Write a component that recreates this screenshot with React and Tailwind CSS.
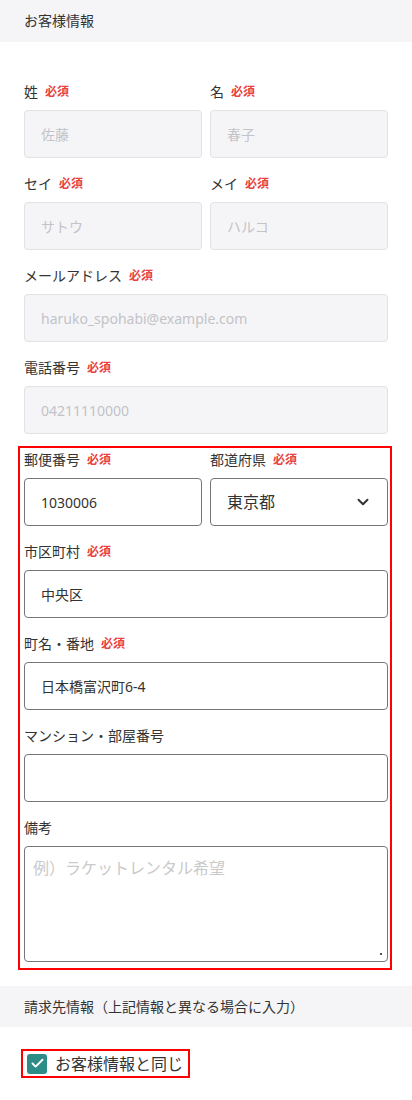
import { ChevronDown, Check } from "lucide-react";

function Label({ text, required }) {
  return (
    <div className="h-5 mb-2 flex items-center gap-[7px] text-sm text-[#333]">
      <span>{text}</span>
      {required && <span className="text-xs font-bold text-[#e8413e]">必須</span>}
    </div>
  );
}

function DisabledField({ label, placeholder }) {
  return (
    <div className="flex-1 min-w-0">
      <Label text={label} required />
      <input
        readOnly
        placeholder={placeholder}
        className="w-full h-12 rounded border border-[#e1e1e6] bg-[#f5f5f7] px-4 text-sm placeholder:text-[#c3c3c8] outline-none"
      />
    </div>
  );
}

function Field({ label, required, value }) {
  return (
    <div className="flex-1 min-w-0">
      <Label text={label} required={required} />
      <input
        readOnly
        defaultValue={value}
        className="w-full h-12 rounded border border-[#767676] bg-white px-4 text-sm text-[#333] outline-none"
      />
    </div>
  );
}

export default function App() {
  return (
    <div className="w-[412px] min-h-[1100px] bg-white font-['Noto_Sans','Noto_Sans_CJK_JP',sans-serif] text-[#333]">
      <div className="h-[42px] bg-[#f5f5f7] flex items-center px-6 text-sm">お客様情報</div>

      <div className="px-6 pt-[40px] flex flex-col gap-4">
        <div className="flex gap-2">
          <DisabledField label="姓" placeholder="佐藤" />
          <DisabledField label="名" placeholder="春子" />
        </div>
        <div className="flex gap-2">
          <DisabledField label="セイ" placeholder="サトウ" />
          <DisabledField label="メイ" placeholder="ハルコ" />
        </div>
        <DisabledField label="メールアドレス" placeholder="haruko_spohabi@example.com" />
        <DisabledField label="電話番号" placeholder="04211110000" />
      </div>

      <div className="mt-3 ml-[18px] mr-[20px] border-2 border-[#f00] pl-1 pr-[2px] pt-[2px] pb-[6px] flex flex-col gap-4">
        <div className="flex gap-2">
          <Field label="郵便番号" required value="1030006" />
          <div className="flex-1 min-w-0">
            <Label text="都道府県" required />
            <div className="h-12 rounded border border-[#767676] bg-white pl-4 pr-[15px] flex items-center justify-between">
              <span className="text-base text-[#333]">東京都</span>
              <ChevronDown size={18} strokeWidth={2.6} className="text-[#333]" />
            </div>
          </div>
        </div>
        <Field label="市区町村" required value="中央区" />
        <Field label="町名・番地" required value="日本橋富沢町6-4" />
        <Field label="マンション・部屋番号" value="" />
        <div>
          <Label text="備考" />
          <div className="relative">
            <textarea
              readOnly
              placeholder="例）ラケットレンタル希望"
              className="block w-full h-[116px] rounded border border-[#767676] bg-white px-2 py-[9px] text-base leading-6 resize-none outline-none placeholder:text-[#cacaca]"
            />
            <span className="absolute right-[6px] bottom-[7px] w-[2px] h-[2px] bg-[#555]" />
          </div>
        </div>
      </div>

      <div className="mt-4 h-[41px] bg-[#f5f5f7] flex items-center px-6 text-sm">
        請求先情報（上記情報と異なる場合に入力）
      </div>

      <div className="mt-[22px] ml-[21px] inline-flex items-center h-[29px] border-2 border-[#f00] pl-1 pr-[5px] gap-2">
        <span className="w-5 h-5 rounded-[3px] bg-[#2e8c88] flex items-center justify-center">
          <Check size={15} strokeWidth={3} className="text-white" />
        </span>
        <span className="text-base text-[#333]">お客様情報と同じ</span>
      </div>
    </div>
  );
}
